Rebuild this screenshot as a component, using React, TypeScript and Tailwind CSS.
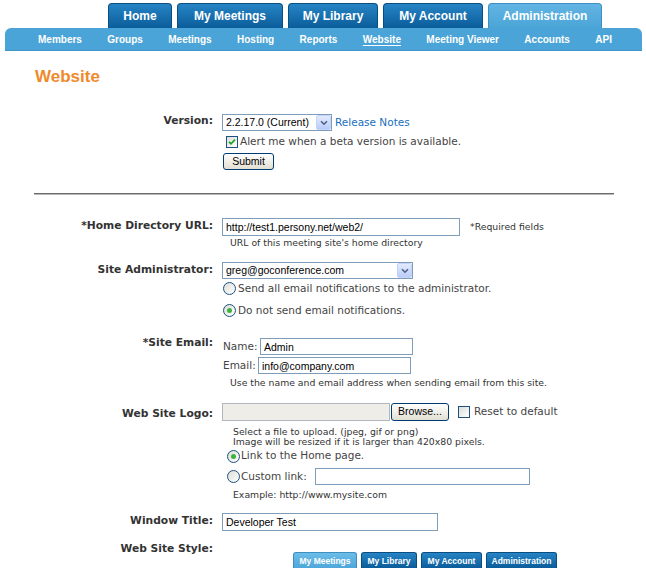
import React from "react";

const lbl =
  "w-[213px] shrink-0 text-right font-['DejaVu_Sans',Verdana,sans-serif] font-bold text-[10.7px] leading-[18px] text-[#333333]";
const txtFont = "font-['DejaVu_Sans',Verdana,sans-serif] text-[10.5px]";
const txt = `${txtFont} text-[#444444]`;
const helpFont = "font-['DejaVu_Sans',Verdana,sans-serif] text-[9.3px] text-[#333333]";
const field = "font-['Liberation_Sans',Arial,sans-serif] text-[10.5px] text-black";

const subNav = ["Members", "Groups", "Meetings", "Hosting", "Reports", "Website", "Meeting Viewer", "Accounts", "API"];

function TopTab({ label, w, active }: { label: string; w: string; active?: boolean }) {
  return (
    <div
      className={`${w} h-[25px] rounded-t-[4px] border border-b-0 flex items-center justify-center font-['Liberation_Sans',Arial,sans-serif] font-bold text-[12px] text-white ${
        active
          ? "bg-linear-to-b from-[#62b5e4] to-[#4ba4d7] border-[#3d8fc2]"
          : "bg-linear-to-b from-[#2684c5] to-[#0a5d9a] border-[#0a4d80]"
      }`}
    >
      {label}
    </div>
  );
}

function MiniTab({ label, w, active }: { label: string; w: string; active?: boolean }) {
  return (
    <div
      className={`${w} h-[16px] rounded-t-[3px] border border-b-0 flex items-center justify-center font-['Liberation_Sans',Arial,sans-serif] font-bold text-[8.5px] leading-[10px] text-white ${
        active
          ? "bg-linear-to-b from-[#6cbde8] to-[#4ea7da] border-[#3d8fc2]"
          : "bg-linear-to-b from-[#2684c5] to-[#0a5d9a] border-[#0a4d80]"
      }`}
    >
      {label}
    </div>
  );
}

function Chevron() {
  return (
    <svg width="8" height="6" viewBox="0 0 8 6">
      <path d="M1 1.2 L4 4.2 L7 1.2" stroke="#4d6185" strokeWidth="1.6" fill="none" />
    </svg>
  );
}

function Select({ value, w }: { value: string; w: string }) {
  return (
    <div className={`${w} h-[17px] border border-[#7f9db9] bg-white flex items-center`}>
      <span className={`${field} pl-[3px] flex-1 leading-[15px] whitespace-nowrap`}>{value}</span>
      <span className="w-[15px] h-[15px] rounded-[2px] border border-[#c3d3fd] bg-linear-to-b from-[#e3ebfd] to-[#b9cdf7] flex items-center justify-center">
        <Chevron />
      </span>
    </div>
  );
}

function Input({ value, w, h = "h-[17px]" }: { value?: string; w: string; h?: string }) {
  return (
    <div className={`${w} ${h} border border-[#7f9db9] bg-white flex items-center`}>
      <span className={`${field} pl-[3px] leading-[14px] whitespace-nowrap`}>{value}</span>
    </div>
  );
}

function Check({ checked }: { checked?: boolean }) {
  return (
    <span className="w-[12px] h-[12px] shrink-0 border border-[#1c5180] bg-linear-to-br from-[#dcdcd7] to-white flex items-center justify-center">
      {checked && (
        <svg width="8" height="8" viewBox="0 0 8 8">
          <path d="M1 3.8 L3 5.8 L7 1.6" stroke="#21a121" strokeWidth="1.7" fill="none" />
        </svg>
      )}
    </span>
  );
}

function Radio({ checked }: { checked?: boolean }) {
  return (
    <span className="w-[13px] h-[13px] shrink-0 rounded-full border border-[#1c5180] bg-linear-to-br from-[#dcdcd7] to-white flex items-center justify-center">
      {checked && <span className="w-[5px] h-[5px] rounded-full bg-[#3cb43c]" />}
    </span>
  );
}

function XpButton({ label, w, h }: { label: string; w: string; h: string }) {
  return (
    <div
      className={`${w} ${h} border border-[#003c74] rounded-[3px] bg-linear-to-b from-white to-[#e2dfd2] flex items-center justify-center ${field}`}
    >
      {label}
    </div>
  );
}

function Row({
  label,
  lo = "",
  className = "",
  children,
}: {
  label: string;
  lo?: string;
  className?: string;
  children?: React.ReactNode;
}) {
  return (
    <div className={`flex items-start ${className}`}>
      <div className={`${lbl} ${lo}`}>{label}</div>
      <div className="ml-[9px] flex flex-col">{children}</div>
    </div>
  );
}

export default function App() {
  return (
    <div className="w-[646px] h-[568px] overflow-hidden bg-white">
      {/* header tabs */}
      <div className="pt-[3px]">
        <div className="flex gap-[5px] pl-[108px]">
          <TopTab label="Home" w="w-[64px]" />
          <TopTab label="My Meetings" w="w-[106px]" />
          <TopTab label="My Library" w="w-[90px]" />
          <TopTab label="My Account" w="w-[100px]" />
          <TopTab label="Administration" w="w-[114px]" active />
        </div>
        <div className="ml-[5px] mr-[4px] h-[23px] rounded-t-[6px] bg-[#4ba4d7] border-b border-[#3f93c6] flex items-center gap-[25.4px] pl-[33px]">
          {subNav.map((s) => (
            <span
              key={s}
              className={`font-['Liberation_Sans',Arial,sans-serif] font-bold text-[10px] text-white whitespace-nowrap ${
                s === "Website" ? "underline underline-offset-2" : ""
              }`}
            >
              {s}
            </span>
          ))}
        </div>
      </div>

      <div className="pl-[35px] mt-[16px] font-['Liberation_Sans',Arial,sans-serif] font-bold text-[17px] leading-[20px] text-[#f0892b]">
        Website
      </div>

      {/* version */}
      <Row label="Version:" lo="-mt-[2px]" className="mt-[27px]">
        <div className="flex items-center">
          <Select value="2.2.17.0 (Current)" w="w-[110px]" />
          <span className={`${txtFont} ml-[3px] text-[#1a6fbd]`}>Release Notes</span>
        </div>
        <div className="mt-[3px] h-[16px] flex items-center gap-[2px] pl-[4px]">
          <Check checked />
          <span className={txt}>Alert me when a beta version is available.</span>
        </div>
        <div className="mt-[3px] ml-[1px]">
          <XpButton label="Submit" w="w-[51px]" h="h-[17px]" />
        </div>
      </Row>

      <div className="mt-[23px] ml-[34px] w-[580px] h-[2px] border-t border-t-[#6b6b6b] border-b border-b-[#b9b9b9]" />

      {/* home directory */}
      <Row label="*Home Directory URL:" lo="-mt-[1px]" className="mt-[23px]">
        <div className="flex items-center">
          <Input value="http://test1.persony.net/web2/" w="w-[238px]" h="h-[18px]" />
          <span className={`${helpFont} leading-[12px] ml-[10px]`}>*Required fields</span>
        </div>
        <div className={`${helpFont} leading-[12px] mt-[1px] pl-[8px]`}>URL of this meeting site's home directory</div>
      </Row>

      {/* site administrator */}
      <Row label="Site Administrator:" lo="-mt-[1px]" className="mt-[13px]">
        <Select value="greg@goconference.com" w="w-[191px]" />
        <div className="mt-[1px] h-[17px] flex items-center gap-[2px] pl-[1px]">
          <Radio />
          <span className={txt}>Send all email notifications to the administrator.</span>
        </div>
        <div className="mt-[5px] h-[17px] flex items-center gap-[2px] pl-[1px]">
          <Radio checked />
          <span className={txt}>Do not send email notifications.</span>
        </div>
      </Row>

      {/* site email */}
      <Row label="*Site Email:" lo="-mt-[4px]" className="mt-[19px]">
        <div className="flex items-center h-[17px]">
          <span className={`${txt} w-[38px] pl-[1px]`}>Name:</span>
          <Input value="Admin" w="w-[153px]" />
        </div>
        <div className="mt-[2px] flex items-center h-[17px]">
          <span className={`${txt} w-[36px] pl-[1px]`}>Email:</span>
          <Input value="info@company.com" w="w-[153px]" />
        </div>
        <div className={`${helpFont} leading-[12px] mt-[3px] pl-[8px]`}>
          Use the name and email address when sending email from this site.
        </div>
      </Row>

      {/* logo */}
      <Row label="Web Site Logo:" lo="mt-[2px]" className="mt-[14px]">
        <div className="flex items-center">
          <div className="w-[168px] h-[18px] border border-[#b3b7bd] bg-[#eeede8]" />
          <div className="ml-[1px]">
            <XpButton label="Browse..." w="w-[58px]" h="h-[18px]" />
          </div>
          <div className="ml-[9px]">
            <Check />
          </div>
          <span className={`${txt} ml-[4px]`}>Reset to default</span>
        </div>
        <div className={`${helpFont} leading-[10px] mt-[6px] pl-[11px]`}>
          Select a file to upload. (jpeg, gif or png)
          <br />
          Image will be resized if it is larger than 420x80 pixels.
        </div>
        <div className="mt-[1px] h-[16px] flex items-center gap-[1px] pl-[5px]">
          <Radio checked />
          <span className={txt}>Link to the Home page.</span>
        </div>
        <div className="mt-[4px] h-[17px] flex items-center gap-[1px] pl-[5px]">
          <Radio />
          <span className={txt}>Custom link:</span>
          <div className="ml-[7px]">
            <Input w="w-[215px]" />
          </div>
        </div>
        <div className={`${helpFont} leading-[12px] mt-[4px] pl-[11px]`}>Example: http://www.mysite.com</div>
      </Row>

      {/* window title */}
      <Row label="Window Title:" lo="-mt-[1px]" className="mt-[12px]">
        <Input value="Developer Test" w="w-[216px]" h="h-[18px]" />
      </Row>

      {/* style */}
      <Row label="Web Site Style:" lo="mt-[1px]" className="mt-[8px]">
        <div className="pt-[13px] pl-[71px] flex gap-[4px]">
          <MiniTab label="My Meetings" w="w-[64px]" active />
          <MiniTab label="My Library" w="w-[56px]" />
          <MiniTab label="My Account" w="w-[61px]" />
          <MiniTab label="Administration" w="w-[71px]" />
        </div>
      </Row>
    </div>
  );
}
